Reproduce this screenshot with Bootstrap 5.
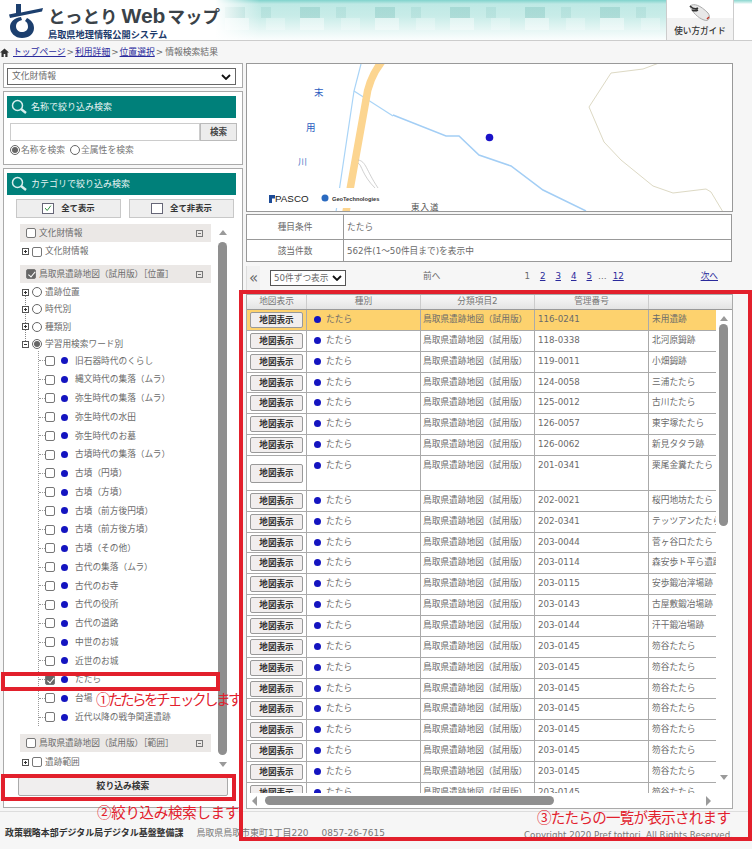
<!DOCTYPE html>
<html lang="ja">
<head>
<meta charset="UTF-8">
<title>とっとりWebマップ 情報検索結果</title>
<link rel="stylesheet" href="https://cdn.jsdelivr.net/npm/bootstrap@5.3.0/dist/css/bootstrap.min.css">
<style>
body { width: 752px; height: 849px; overflow: hidden; background: #f6f6f6; color: #6a6a6a; font: 8.7px/1.2 "DejaVu Sans", "Noto Sans CJK JP", sans-serif; position: relative; }
a { color: #2a2a9c; }
.top-head { height: 41px; background: linear-gradient(#8ad6cf 0, #d8f2ef 3px, #fff 4px); border-bottom: 1px solid #ccc; }
.head-band { width: 666px; background-color: #d2efec;
  background-image:
    linear-gradient(90deg, #fff 0, #fff 215px, rgba(255,255,255,0) 260px),
    repeating-linear-gradient(90deg, rgba(0,120,110,.14) 0 20px, transparent 20px 36px, rgba(0,120,110,.08) 36px 46px, transparent 46px 75px),
    repeating-linear-gradient(90deg, rgba(255,255,255,.4) 0 24px, transparent 24px 41px, rgba(255,255,255,.25) 41px 60px, transparent 60px 75px),
    linear-gradient(#7fd3cc 0, #bfe9e5 4px, #c8ece8 16px, #e2f5f3 28px, #fbfefe 100%);
  background-size: 100% 100%, 100% 11px, 100% 12px, 100% 100%;
  background-position: 0 0, 0 7px, 0 18px, 0 0;
  background-repeat: no-repeat; }
.head-logo { gap: 4px; padding: 4px 0 0 9px; width: 320px; }
.logo-title { font-family: "Noto Sans CJK JP", sans-serif; font-size: 17.5px; line-height: 24px; font-weight: 700; color: #3a4248; white-space: nowrap; }
.logo-web { font-family: "Liberation Sans", sans-serif; font-size: 21px; margin: 0 2px 0 4px; }
.logo-sub { font-family: "Noto Sans CJK JP", sans-serif; font-size: 9.2px; line-height: 10px; font-weight: 700; color: #1b3a6b; margin-top: 1px; }
.guide-box { width: 68px; background: linear-gradient(#fff 0, #fff 18px, #f2f2f2 18px); border: 1px solid #ccc; border-width: 0 1px; color: #333; font-size: 8.6px; font-weight: 500; padding-bottom: 4px; }
.crumb-bar { height: 22px; gap: 1px; font-size: 8.8px; white-space: nowrap; }
.crumb-bar svg { margin-right: 3px; }
.crumb-bar span { margin-left: 1px; }
.page-cols { gap: 3px; padding-left: 3px; width: 734px; }
.side-col { width: 240px; gap: 3px; }
.main-col { width: 487px; }
.box { background: #fff; border: 1px solid #aaa; }
.sel-box { height: 25px; padding: 4px 6px 4px 3px; }
.fake-select { height: 17px; border: 1px solid #666; padding: 0 4px; font-size: 8.8px; }
.chev { width: 10px; height: 6px; }
.search-box { height: 74px; padding: 4px 3px; }
.cat-box { height: 640px; padding: 4px 3px; position: relative; }
.teal-head { height: 22px; width: 229px; background: #00807a; color: #e6f4f3; font-size: 9px; gap: 4px; padding-left: 4px; }
.search-row { margin: 5px 0 0 3px; height: 18px; width: 227px; }
.search-input { flex: 1; background: #fff; border: 1px solid #ccc; }
.search-btn { width: 37px; background: #ececec; border: 1px solid #bbb; font-size: 8.6px; font-weight: 700; color: #444; }
.radio-row { margin: 2px 0 0 3px; height: 14px; font-size: 8.8px; gap: 1px; color: #777; }
.radio-mark { width: 10px; height: 10px; border: 1px solid #666; border-radius: 50%; background: #fff; flex: none; position: relative; }
.radio-mark.is-on::after { content: ""; position: absolute; inset: 1px; border-radius: 50%; background: #666; }
.all-row { margin: 4px 0 0 9px; gap: 8px; }
.all-btn { width: 105px; height: 19px; background: #eee; border: 1px solid #c8c8c8; gap: 7px; color: #333; font-size: 8.4px; font-weight: 700; }
.tick-box { width: 12px; height: 11px; border: 1px solid #667; background: #fff; flex: none; }
.tree-wrap { margin: 6px 0 0 0; height: 548px; }
.tree-pane { width: 209px; overflow: hidden; padding-left: 13px; }
.sec-head { height: 18px; background: #ebe8e6; margin-bottom: 1px; width: 191px; padding: 0 8px 0 6px; gap: 3px; white-space: nowrap; }
.sec-head.is-tight { margin-bottom: 0; }
.sec-head .folder { margin-left: auto; width: 7px; height: 7px; border: 1px solid #777; position: relative; flex: none; }
.folder::after { content: ""; position: absolute; left: 1px; right: 1px; top: 2px; height: 1px; background: #777; }
.check-mark { width: 10px; height: 10px; border: 1px solid #777; border-radius: 2px; background: #fff; flex: none; }
.check-mark.is-on { background: #666; position: relative; }
.check-mark.is-on::after { content: ""; position: absolute; left: 2.5px; top: 0; width: 3.5px; height: 6.5px; border: solid #fff; border-width: 0 1.3px 1.3px 0; transform: rotate(40deg); }
.tree-group { position: relative; }
.tree-group::before { content: ""; position: absolute; left: 5px; top: 8px; bottom: 8px; border-left: 1px dotted #888; }
.tree-row { height: 17.4px; gap: 3px; white-space: nowrap; margin-left: 2px; position: relative; }
.tree-gap { height: 5px; }
.pm-box { width: 7px; height: 7px; border: 1px solid #555; background: #fff; position: relative; flex: none; }
.pm-box::before { content: ""; position: absolute; left: 1px; right: 1px; top: 2px; height: 1px; background: #333; }
.pm-box.is-plus::after { content: ""; position: absolute; top: 1px; bottom: 1px; left: 2px; width: 1px; background: #333; }
.leaf-list { margin: -1.5px 0 8px 18px; border-left: 1px dotted #999; }
.leaf-row { height: 18.75px; white-space: nowrap; }
.leaf-row::before { content: ""; width: 6px; border-top: 1px dotted #999; flex: none; }
.leaf-row .check-mark { margin-right: 6px; }
.blue-dot { width: 7px; height: 7px; border-radius: 50%; background: #1414c0; flex: none; }
.leaf-row .blue-dot { margin-right: 7px; }
.vbar { width: 9px; margin-left: 2px; padding-top: 6px; gap: 7px; }
.sb-up { width: 0; height: 0; border: 4.5px solid transparent; border-top: 0; border-bottom: 5px solid #9a9a9a; }
.sb-down { width: 0; height: 0; border: 4.5px solid transparent; border-bottom: 0; border-top: 5px solid #9a9a9a; }
.sb-thumb { background: #8f8f8f; border-radius: 5px; width: 9px; }
.sb-left { width: 0; height: 0; border: 5px solid transparent; border-left: 0; border-right: 5px solid #9a9a9a; }
.sb-right { width: 0; height: 0; border: 5px solid transparent; border-right: 0; border-left: 5px solid #9a9a9a; }
.narrow-btn { display: block; width: 210px; height: 19px; margin: 5px 0 0 11px; padding: 0; background: #f0eeee; border: 1px solid #aaa; border-radius: 2px; color: #333; font-size: 8.8px; font-weight: 700; }
.map-box { height: 149px; position: relative; overflow: hidden; border-color: #999; }
.map-box svg { display: block; }
.info-tbl { width: 486px; height: 48px; margin: 2px 0 0; border: 1px solid #999; background: #fff; }
.info-row { height: 23.5px; }
.info-row + .info-row { border-top: 1px solid #999; }
.info-key { width: 97px; border-right: 1px solid #999; }
.info-val { padding-left: 3px; }
.pager-bar { height: 26px; margin-top: 3px; position: relative; white-space: nowrap; }
.pg-arrow { width: 14px; height: 24px; font-size: 15px; line-height: 24px; color: #666; text-align: center; background: #f1f1f1; border-left: 1px solid #ddd; }
.pg-select { width: 76px; height: 16px; margin-left: 10px; border: 1px solid #555; background: #fff; padding: 0 3px; }
.pg-prev { margin-left: 77px; margin-top: -3px; }
.pg-nums { margin-left: 84px; margin-top: -3px; gap: 10px; }
.pg-dots { margin: 0 -4px; }
.pg-next { margin-left: auto; margin-right: 15px; margin-top: -3px; }
.list-box { height: 515px; margin-top: 3px; position: relative; overflow: hidden; border-color: #aaa; }
.list-head { height: 15px; background: linear-gradient(#f8f8f8, #e4e4e4); border-bottom: 1px solid #999; color: #777; width: 485px; }
.list-head span { display: block; text-align: center; border-right: 1px solid #ccc; line-height: 13px; height: 14px; }
.list-head .c5 { flex: 1; border-right: 0; }
.c1 { width: 60px; flex: none; }
.c2 { width: 114px; flex: none; }
.c3 { width: 114px; flex: none; }
.c4 { width: 114px; flex: none; }
.c5 { width: 67px; flex: none; overflow: hidden; white-space: nowrap; }
.list-rows { width: 469px; height: 483px; overflow: hidden; flex: none; }
.list-row { height: 20.85px; border-bottom: 1px solid #aaa; background: #fff; }
.list-row.is-pick { background: #fdd26e; }
.list-row.is-tall { height: 35px; }
.list-row > div { height: 100%; border-right: 1px solid #aaa; padding: 4px 2px 0 2px; white-space: nowrap; overflow: hidden; }
.list-row > div.c1 { padding: 2px 2px 0 3px; }
.list-row > div:last-child { border-right: 0; padding-left: 3px; }
.list-row > div.c4 { padding-left: 3px; }
.map-btn { width: 53px; height: 16px; background: #f1eeee; border: 1px solid #999; border-radius: 2px; font-size: 8.6px; font-weight: 700; color: #333; line-height: 14px; text-align: center; }
.is-tall .map-btn { height: 19px; line-height: 17px; margin-top: 6px; }
.list-row .blue-dot { display: inline-block; margin: 0 5px 0 5px; vertical-align: -1px; }
.vbar-list { width: 15px; align-items: center; padding-top: 6px; }
.vbar-list .sb-thumb { margin-top: 3px; height: 202px; }
.vbar-list .sb-down { margin-top: 249px; }
.hbar { height: 15px; padding: 0 21px 0 5px; }
.hbar-thumb { width: 289px; height: 9px; border-radius: 5px; background: #8f8f8f; margin-left: 8px; }
.foot-bar { position: absolute; left: 0; right: 0; top: 811px; height: 38px; border-top: 1px solid #ddd; padding: 16px 0 0 5px; color: #777; white-space: nowrap; font-size: 8.95px; }
.foot-bar b { color: #333; font-weight: 700; margin-right: 13px; }
.foot-tel { margin-left: 13px; }
.foot-copy { position: absolute; left: 524px; top: 18px; font-size: 8.7px; color: #777; }
.red-box { position: absolute; border: 4px solid #e2202c; pointer-events: none; }
.red-note { position: absolute; color: #e2202c; font-family: "Noto Sans CJK JP", sans-serif; font-size: 14.5px; white-space: nowrap; letter-spacing: -.3px; line-height: 18px; }
.red-note.is-one { left: 96px; top: 690px; letter-spacing: -2.5px; }
.red-note.is-two { left: 97px; top: 803px; }
.red-note.is-three { left: 537px; top: 808px; letter-spacing: -.7px; }
.red-one { left: 1px; top: 672px; width: 219px; height: 19px; }
.red-two { left: 1px; top: 774px; width: 235px; height: 27px; }
.red-three { left: 239px; top: 290px; width: 513px; height: 551px; }
</style>
</head>
<body>
<div class="top-head d-flex">
  <div class="head-band d-flex">
    <div class="head-logo d-flex">
      <svg width="35" height="34" viewBox="0 0 35 34"><path d="M7 0h5v8.500L34 4 33 7.500 1 14 0 10.500 7 9z" fill="#1c3f6e"/><path fill-rule="evenodd" d="M12 13C5 14 1 18 1 23c0 6 5 11 12 11s12-4 12-10c0-5-3-8-7-10l-2 3c2 1 3 3 3 6 0 3-3 5-6 5s-6-2-6-6c0-3 2-5 6-6z" fill="#1c3f6e"/></svg>
      <div>
        <div class="logo-title">とっとり<span class="logo-web">Web</span>マップ</div>
        <div class="logo-sub">鳥取県地理情報公開システム</div>
      </div>
    </div>
  </div>
  <div class="guide-box d-flex flex-column align-items-center justify-content-end">
    <svg width="24" height="19" viewBox="0 0 24 19"><path d="M2 3C6 0 12 2 20 10c3 4 1 9-4 7C10 15 4 9 2 3Z" fill="#e8e8e8" stroke="#aaa"/><path d="M2 3c3 3 5 4 8 2M4 7c2 1 4 1 6 0" stroke="#333" stroke-width="1.600" fill="none"/><path d="M19 16l2-2" stroke="#c0392b" stroke-width="1.500"/></svg>
    <span class="mt-1">使い方ガイド</span>
  </div>
</div>
<div class="crumb-bar d-flex align-items-center">
  <svg width="9" height="9" viewBox="0 0 9 9"><path d="M4.500 .5 0 4.500h1.500V9h2.200V6h1.600v3h2.200V4.500H9z" fill="#333"/></svg>
  <a href="#">トップページ</a>&gt;<a href="#">利用詳細</a>&gt;<a href="#">位置選択</a>&gt;<span>情報検索結果</span>
</div>
<div class="page-cols d-flex">
  <div class="side-col d-flex flex-column">
    <div class="box sel-box">
      <div class="fake-select d-flex align-items-center justify-content-between">
        <span>文化財情報</span>
        <svg class="chev" viewBox="0 0 10 6"><path d="M1 1l4 4 4-4" fill="none" stroke="#111" stroke-width="1.800"/></svg>
      </div>
    </div>
    <div class="box search-box">
      <div class="teal-head d-flex align-items-center">
        <svg width="16" height="16" viewBox="0 0 16 16"><circle cx="6.500" cy="6.500" r="5" fill="none" stroke="#d8eeee" stroke-width="1.500"/><path d="M10 10l5 4" stroke="#d8eeee" stroke-width="2.500"/></svg>
        <span>名称で絞り込み検索</span>
      </div>
      <div class="search-row d-flex">
        <div class="search-input"></div>
        <div class="search-btn d-flex align-items-center justify-content-center">検索</div>
      </div>
      <div class="radio-row d-flex align-items-center">
        <span class="radio-mark is-on"></span><span>名称を検索</span>
        <span class="radio-mark ms-1"></span><span>全属性を検索</span>
      </div>
    </div>
    <div class="box cat-box">
      <div class="teal-head d-flex align-items-center">
        <svg width="16" height="16" viewBox="0 0 16 16"><circle cx="6.500" cy="6.500" r="5" fill="none" stroke="#d8eeee" stroke-width="1.500"/><path d="M10 10l5 4" stroke="#d8eeee" stroke-width="2.500"/></svg>
        <span>カテゴリで絞り込み検索</span>
      </div>
      <div class="all-row d-flex">
        <div class="all-btn d-flex align-items-center justify-content-center">
          <svg class="tick-box" viewBox="0 0 11 11"><path d="M2 5l2.500 3L9 2" fill="none" stroke="#2c8a3a" stroke-width="1.200"/></svg><span>全て表示</span>
        </div>
        <div class="all-btn d-flex align-items-center justify-content-center">
          <span class="tick-box"></span><span>全て非表示</span>
        </div>
      </div>
      <div class="tree-wrap d-flex">
        <div class="tree-pane" id="treePane"></div>
        <div class="vbar d-flex flex-column align-items-center">
          <div class="sb-up"></div>
          <div class="sb-thumb" style="height:513px"></div>
          <div class="sb-down"></div>
        </div>
      </div>
      <button class="narrow-btn" type="button">絞り込み検索</button>
    </div>
  </div>
  <div class="main-col d-flex flex-column">
    <div class="box map-box">
      <svg width="485" height="147" viewBox="247 64 485 147">
        <g fill="none">
          <path d="M361 64 L354 91 L336 212" stroke="#a9d4f7" stroke-width="1.200"/>
          <path d="M354 91 L393 116" stroke="#a9d4f7" stroke-width="1.200"/>
          <path d="M383 60 C375 70 368 82 366 100 L346 212" stroke="#fcd590" stroke-width="7.500"/>
          <path d="M393 115 L446 136 L459 136 L479 155 L511 166 L543 190 L586 211" stroke="#a3cef5" stroke-width="1.500"/>
          <path d="M659 63 L643 69 L611 73 L589 107 L604 142 L621 160 L653 186 L673 193 L706 189 L711 192 L723 212" stroke="#ddd9c4" stroke-width="1"/>
          <path d="M358 160 C366 161 366 170 378 188 M358 163 C362 165 362 175 375 188" stroke="#bbb" stroke-width=".7"/>
        </g>
        <rect x="247" y="188" width="136" height="20" fill="#fff"/>
        <circle cx="489.500" cy="137.500" r="3.800" fill="#1a12c8"/>
        <g fill="#2a5cc0" font-size="9.500" font-family="Noto Sans CJK JP, sans-serif"><text x="314" y="96">末</text><text x="306" y="131">用</text></g>
        <text x="298" y="165" fill="#4a78c8" font-size="9" font-family="Noto Sans CJK JP, sans-serif">川</text>
        <text x="275" y="202" fill="#222" font-size="9.800" font-family="Liberation Sans, sans-serif">PASCO</text>
        <text x="332" y="201" fill="#333" font-size="5.700" font-family="Liberation Sans, sans-serif" font-weight="700">GeoTechnologies</text>
        <path d="M269 195h6v3.500h-3V203h-3z" fill="#1d4c98"/>
        <circle cx="325" cy="198" r="3.500" fill="#2a6ac0"/>
        <text x="411" y="210" fill="#555" font-size="8.500" letter-spacing="1" font-family="Noto Sans CJK JP, sans-serif">東入道</text>
      </svg>
    </div>
    <div class="info-tbl">
      <div class="info-row d-flex align-items-center"><div class="info-key h-100 d-flex align-items-center justify-content-center">種目条件</div><div class="info-val">たたら</div></div>
      <div class="info-row d-flex align-items-center"><div class="info-key h-100 d-flex align-items-center justify-content-center">該当件数</div><div class="info-val">562件(1～50件目まで)を表示中</div></div>
    </div>
    <div class="pager-bar d-flex align-items-center">
      <div class="pg-arrow">«</div>
      <div class="pg-select d-flex align-items-center justify-content-between"><span>50件ずつ表示</span><svg class="chev" viewBox="0 0 10 6"><path d="M1 1l4 4 4-4" fill="none" stroke="#111" stroke-width="1.800"/></svg></div>
      <div class="pg-prev">前へ</div>
      <div class="pg-nums d-flex"><span>1</span><a href="#">2</a><a href="#">3</a><a href="#">4</a><a href="#">5</a><span class="pg-dots">…</span><a href="#">12</a></div>
      <a class="pg-next" href="#">次へ</a>
    </div>
    <div class="box list-box">
      <div class="list-head d-flex">
        <span class="c1">地図表示</span><span class="c2">種別</span><span class="c3">分類項目2</span><span class="c4">管理番号</span><span class="c5"></span>
      </div>
      <div class="d-flex">
        <div class="list-rows" id="listRows"></div>
        <div class="vbar-list d-flex flex-column">
          <div class="sb-up"></div>
          <div class="sb-thumb"></div>
          <div class="sb-down"></div>
        </div>
      </div>
      <div class="hbar d-flex align-items-center">
        <div class="sb-left"></div>
        <div class="hbar-thumb"></div>
        <div class="sb-right ms-auto"></div>
      </div>
    </div>
  </div>
</div>
<div class="foot-bar">
  <b>政策戦略本部デジタル局デジタル基盤整備課</b><span>鳥取県鳥取市東町1丁目220</span><span class="foot-tel">0857-26-7615</span>
  <span class="foot-copy">Copyright 2020 Pref tottori. All Rights Reserved.</span>
</div>
<div class="red-box red-one"></div>
<div class="red-box red-two"></div>
<div class="red-box red-three"></div>
<div class="red-note is-one">①たたらをチェックします</div>
<div class="red-note is-two">②絞り込み検索します</div>
<div class="red-note is-three">③たたらの一覧が表示されます</div>
<script>
// tree on the left
const leaves = ['旧石器時代のくらし','縄文時代の集落（ムラ）','弥生時代の集落（ムラ）','弥生時代の水田','弥生時代のお墓','古墳時代の集落（ムラ）','古墳（円墳）','古墳（方墳）','古墳（前方後円墳）','古墳（前方後方墳）','古墳（その他）','古代の集落（ムラ）','古代のお寺','古代の役所','古代の道路','中世のお城','近世のお城','たたら','台場','近代以降の戦争関連遺跡'];
function secHead(label, on, tight) {
  return '<div class="sec-head d-flex align-items-center' + (tight ? ' is-tight' : '') + '"><span class="check-mark' + (on ? ' is-on' : '') + '"></span><span>' + label + '</span><span class="folder"></span></div>';
}
function treeRow(label, mark, plus) {
  return '<div class="tree-row d-flex align-items-center"><span class="pm-box' + (plus ? ' is-plus' : '') + '"></span>' + mark + '<span>' + label + '</span></div>';
}
const chk = '<span class="check-mark"></span>';
const rad = '<span class="radio-mark"></span>';
let tree = secHead('文化財情報') + treeRow('文化財情報', chk, true) + '<div class="tree-gap"></div>';
tree += secHead('鳥取県遺跡地図（試用版）［位置］', true, true);
tree += '<div class="tree-group">' + treeRow('遺跡位置', rad, true) + treeRow('時代別', rad, true) + treeRow('種類別', rad, true);
tree += treeRow('学習用検索ワード別', '<span class="radio-mark is-on"></span>', false) + '</div>';
tree += '<div class="leaf-list">';
leaves.forEach(function (l) {
  const on = l === 'たたら';
  tree += '<div class="leaf-row d-flex align-items-center"><span class="check-mark' + (on ? ' is-on' : '') + '"></span><span class="blue-dot"></span><span>' + l + '</span></div>';
});
tree += '</div>';
tree += secHead('鳥取県遺跡地図（試用版）［範囲］') + treeRow('遺跡範囲', chk, true);
document.getElementById('treePane').innerHTML = tree;

// result rows
const rows = [['116-0241','未用遺跡'],['118-0338','北河原鉧跡'],['119-0011','小畑鉧跡'],['124-0058','三浦たたら'],['125-0012','古川たたら'],['126-0057','東宇塚たたら'],['126-0062','新見タタラ跡'],['201-0341','栗尾金糞たたら'],['202-0021','桜円地坊たたら'],['202-0341','テッツアンたたら'],['203-0044','菅ヶ谷口たたら'],['203-0114','森安歩ト平ら遺跡'],['203-0115','安歩鍛冶滓場跡'],['203-0143','古屋敷鍛冶場跡'],['203-0144','汗干鍛冶場跡'],['203-0145','笏谷たたら'],['203-0145','笏谷たたら'],['203-0145','笏谷たたら'],['203-0145','笏谷たたら'],['203-0145','笏谷たたら'],['203-0145','笏谷たたら'],['203-0145','笏谷たたら'],['203-0145','笏谷たたら']];
let html = '';
rows.forEach(function (r, i) {
  const cls = (i === 0 ? ' is-pick' : '') + (i === 7 ? ' is-tall' : '');
  html += '<div class="list-row d-flex' + cls + '"><div class="c1"><div class="map-btn">地図表示</div></div><div class="c2"><span class="blue-dot"></span>たたら</div><div class="c3">鳥取県遺跡地図（試用版）</div><div class="c4">' + r[0] + '</div><div class="c5">' + r[1] + '</div></div>';
});
document.getElementById('listRows').innerHTML = html;
</script>
<script src="https://cdn.jsdelivr.net/npm/bootstrap@5.3.0/dist/js/bootstrap.bundle.min.js"></script>
</body>
</html>
